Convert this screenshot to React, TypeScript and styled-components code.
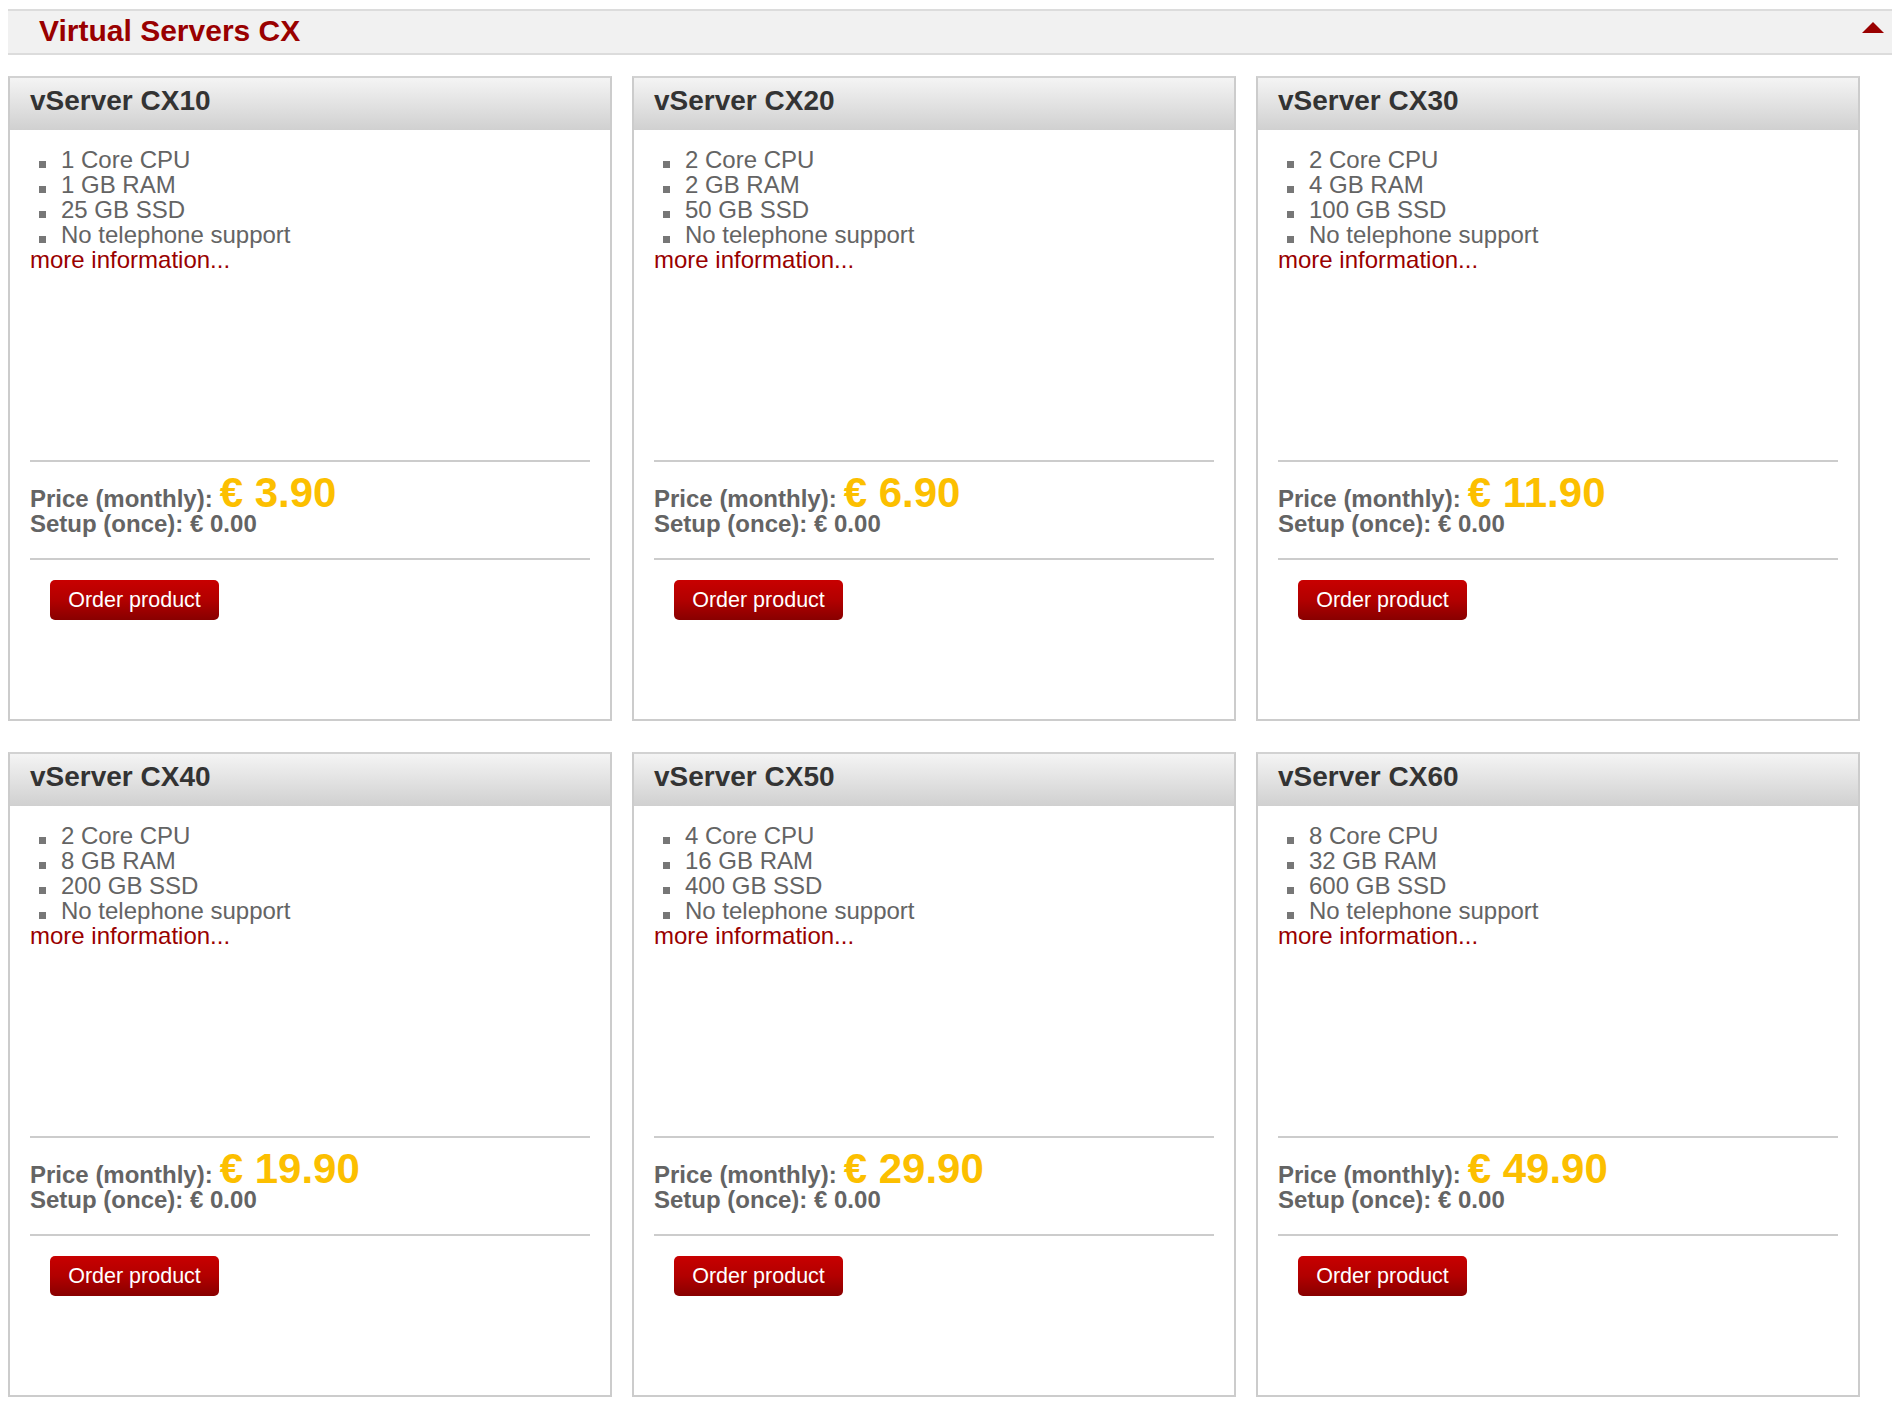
import React from "react";
import styled, { createGlobalStyle } from "styled-components";

const GlobalStyle = createGlobalStyle`
  html, body {
    margin: 0;
    padding: 0;
    background: #ffffff;
  }
  body {
    font-family: "Liberation Sans", Arial, Helvetica, sans-serif;
  }
`;

const Page = styled.div`
  padding: 9px 8px 12px 8px;
`;

const SectionBar = styled.div`
  display: flex;
  align-items: center;
  justify-content: space-between;
  height: 39px;
  padding: 0 8px 3px 31px;
  box-sizing: content-box;
  background: #f1f1f1;
  border-top: 2px solid #dcdcdc;
  border-bottom: 2px solid #dcdcdc;
`;

const SectionTitle = styled.h1`
  margin: 0;
  font-size: 30px;
  line-height: 38px;
  font-weight: bold;
  color: #990000;
`;

const CollapseArrow = styled.span`
  align-self: flex-start;
  margin-top: 11px;
  width: 0;
  height: 0;
  border-left: 11px solid transparent;
  border-right: 11px solid transparent;
  border-bottom: 11px solid #990000;
`;

const Grid = styled.div`
  display: grid;
  grid-template-columns: repeat(3, 604px);
  column-gap: 20px;
  row-gap: 31px;
  margin-top: 21px;
`;

const Card = styled.div`
  display: flex;
  flex-direction: column;
  box-sizing: border-box;
  border: 2px solid #cccccc;
  border-top-color: #d2d2d2;
  background: #ffffff;
`;

const CardHeader = styled.div`
  height: 52px;
  box-sizing: border-box;
  padding: 4px 0 0 20px;
  background: linear-gradient(to bottom, #f4f4f4 0%, #e4e4e4 45%, #d0d0d0 100%);
  font-size: 28px;
  line-height: 38px;
  font-weight: bold;
  color: #333333;
`;

const CardBody = styled.div`
  padding: 17px 20px 0 20px;
`;

const Features = styled.div`
  height: 313px;
`;

const FeatureList = styled.ul`
  list-style: none;
  margin: 0;
  padding: 0;
`;

const FeatureItem = styled.li`
  font-size: 24px;
  line-height: 25px;
  color: #646464;
  white-space: nowrap;
`;

const Bullet = styled.span`
  display: inline-block;
  width: 7px;
  height: 7px;
  margin: 0 15px 0 9px;
  background: #777777;
  vertical-align: 0;
`;

const MoreLink = styled.a`
  display: block;
  font-size: 24px;
  line-height: 25px;
  color: #990000;
  text-decoration: none;
`;

const PriceBlock = styled.div`
  border-top: 2px solid #cccccc;
  border-bottom: 2px solid #cccccc;
  padding: 13px 0 22px 0;
`;

const PriceRow = styled.div`
  display: flex;
  align-items: baseline;
  gap: 7px;
`;

const PriceLabel = styled.span`
  font-size: 24px;
  line-height: 25px;
  font-weight: bold;
  color: #646464;
`;

const PriceValue = styled.span`
  font-size: 42px;
  line-height: 36px;
  font-weight: bold;
  color: #fcbf00;
`;

const SetupRow = styled.div`
  font-size: 24px;
  line-height: 25px;
  font-weight: bold;
  color: #646464;
`;

const Actions = styled.div`
  display: flex;
  padding: 20px 0 99px 20px;
`;

const OrderButton = styled.button`
  display: inline-flex;
  align-items: center;
  justify-content: center;
  width: 169px;
  height: 40px;
  padding: 0;
  border: none;
  border-radius: 5px;
  background: linear-gradient(to bottom, #c80000 0%, #b20000 50%, #880000 100%);
  color: #ffffff;
  font-family: "Liberation Sans", Arial, Helvetica, sans-serif;
  font-size: 21.5px;
  cursor: pointer;
`;

type Server = {
  name: string;
  cpu: string;
  ram: string;
  ssd: string;
  price: string;
};

const servers: Server[] = [
  { name: "vServer CX10", cpu: "1 Core CPU", ram: "1 GB RAM", ssd: "25 GB SSD", price: "€ 3.90" },
  { name: "vServer CX20", cpu: "2 Core CPU", ram: "2 GB RAM", ssd: "50 GB SSD", price: "€ 6.90" },
  { name: "vServer CX30", cpu: "2 Core CPU", ram: "4 GB RAM", ssd: "100 GB SSD", price: "€ 11.90" },
  { name: "vServer CX40", cpu: "2 Core CPU", ram: "8 GB RAM", ssd: "200 GB SSD", price: "€ 19.90" },
  { name: "vServer CX50", cpu: "4 Core CPU", ram: "16 GB RAM", ssd: "400 GB SSD", price: "€ 29.90" },
  { name: "vServer CX60", cpu: "8 Core CPU", ram: "32 GB RAM", ssd: "600 GB SSD", price: "€ 49.90" },
];

function ServerCard({ server }: { server: Server }) {
  const features = [server.cpu, server.ram, server.ssd, "No telephone support"];
  return (
    <Card>
      <CardHeader>{server.name}</CardHeader>
      <CardBody>
        <Features>
          <FeatureList>
            {features.map((f) => (
              <FeatureItem key={f}>
                <Bullet />
                {f}
              </FeatureItem>
            ))}
          </FeatureList>
          <MoreLink href="#">more information...</MoreLink>
        </Features>
        <PriceBlock>
          <PriceRow>
            <PriceLabel>Price (monthly):</PriceLabel>
            <PriceValue>{server.price}</PriceValue>
          </PriceRow>
          <SetupRow>Setup (once): € 0.00</SetupRow>
        </PriceBlock>
        <Actions>
          <OrderButton type="button">Order product</OrderButton>
        </Actions>
      </CardBody>
    </Card>
  );
}

export default function App() {
  return (
    <>
      <GlobalStyle />
      <Page>
        <SectionBar>
          <SectionTitle>Virtual Servers CX</SectionTitle>
          <CollapseArrow />
        </SectionBar>
        <Grid>
          {servers.map((s) => (
            <ServerCard key={s.name} server={s} />
          ))}
        </Grid>
      </Page>
    </>
  );
}
